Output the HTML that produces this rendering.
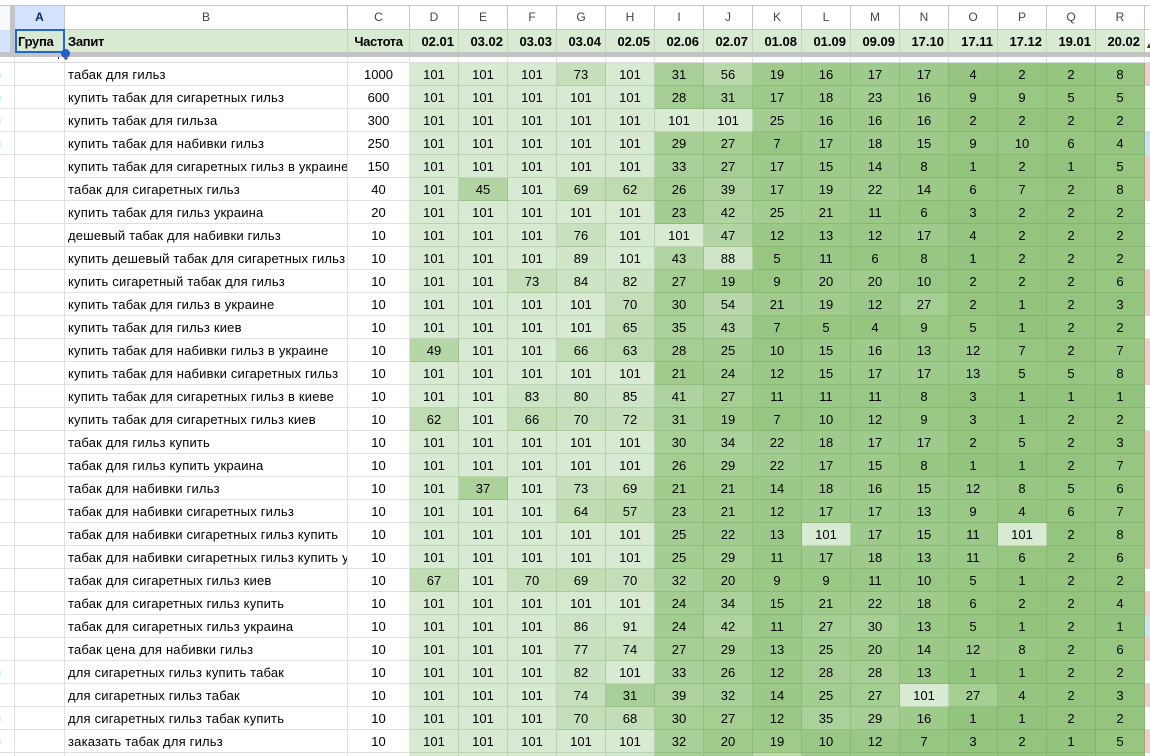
<!DOCTYPE html>
<html lang="uk"><head><meta charset="utf-8"><title>Таблиця</title>
<style>
html,body{margin:0;padding:0;width:1150px;height:756px;overflow:hidden;background:#fff}
body{position:relative;font:13px "Liberation Sans","Noto Sans CJK SC",sans-serif;color:#000}
div.a{position:absolute}
table{position:absolute;border-collapse:separate;border-spacing:0;table-layout:fixed;width:1150px;left:0}
td{box-sizing:border-box;padding:0;overflow:hidden;white-space:nowrap;text-align:center;border-right:1px solid #e0e0e0;border-bottom:1px solid #e0e0e0}
#g tr{height:23px}
#g td{height:23px;line-height:20px;padding-top:2px}
#g td:nth-child(3){text-align:left;padding-left:3px;letter-spacing:.19px}
#g td:nth-child(n+5):nth-child(-n+19){--v:101;background:rgb(calc(147 + .7*(var(--v) - 1)),calc(196 + .38*(var(--v) - 1)),calc(125 + .86*(var(--v) - 1)));border-color:rgba(70,120,50,.2)}
#g td:last-child{border-right:0}
#g td.p{background:#f4cccc;border-bottom-color:#f4cccc}
#g td.b{background:#cfe2f3;border-bottom-color:#cfe2f3}
#g tr.s{height:6px}
#g tr.s td{height:6px;line-height:0;padding:0;background:#fff!important;border-right:1px solid #e0e0e0!important;border-bottom:1px solid #dcdcdc!important;font-size:0}
#g tr.s td:last-child{border-right:0!important}
#h tr.l td{height:24px;border-right:1px solid #c7c7c7;border-bottom:1px solid #c7c7c7;font-size:12px;color:#444;line-height:23px}
#h tr.l td:last-child{border:0;border-bottom:1px solid #c7c7c7}
#h tr.l td.sel{background:#d3e3fd;color:#0b2a6b;font-weight:bold}
#h tr.t td{height:23px;background:#d9ead3;font-weight:bold;line-height:23px;border-right:1px solid #c3d8bb;border-bottom:0;color:#000;text-align:right;padding-right:4px}
#h tr.t td.lf{text-align:left;padding:0 0 0 3px;letter-spacing:-.3px}
#h tr.t td.ce{text-align:center;padding:0;letter-spacing:-.4px}
#h tr.t td.e{background:#fff;border:0}
.cy{background:#bdf3fb;width:1px;height:4px;left:0}
</style></head><body>
<table id="h" style="top:6px"><colgroup><col style="width:15px"><col style="width:50px"><col style="width:283px"><col style="width:62px"><col span="15" style="width:49px"><col style="width:5px"></colgroup>
<tr class="l"><td style="border:0;background:#f8f9fa"></td><td class="sel">A</td><td>B</td><td>C</td><td>D</td><td>E</td><td>F</td><td>G</td><td>H</td><td>I</td><td>J</td><td>K</td><td>L</td><td>M</td><td>N</td><td>O</td><td>P</td><td>Q</td><td>R</td><td></td></tr>
<tr class="t"><td class="e" style="background:#d3e3fd"></td><td class="lf">Група</td><td class="lf">Запит</td><td class="ce">Частота</td><td>02.01</td><td>03.02</td><td>03.03</td><td>03.04</td><td>02.05</td><td>02.06</td><td>02.07</td><td>01.08</td><td>01.09</td><td>09.09</td><td>17.10</td><td>17.11</td><td>17.12</td><td>19.01</td><td>20.02</td><td class="e"></td></tr>
</table>
<div class="a" style="left:0;top:5px;width:1150px;height:1px;background:#c7c7c7"></div>
<div class="a" style="left:10px;top:6px;width:5px;height:46px;background:#c4c4c4"></div>
<div class="a" style="left:0;top:52px;width:1150px;height:5px;background:#c4c4c4"></div>
<table id="g" style="top:57px"><colgroup><col style="width:15px"><col style="width:50px"><col style="width:283px"><col style="width:62px"><col span="15" style="width:49px"><col style="width:5px"></colgroup>
<tr class="s"><td></td><td></td><td></td><td></td><td></td><td></td><td></td><td></td><td></td><td></td><td></td><td></td><td></td><td></td><td></td><td></td><td></td><td></td><td></td><td></td></tr>
<tr><td></td><td></td><td>табак для гильз</td><td>1000</td><td>101</td><td>101</td><td>101</td><td style="--v:73">73</td><td>101</td><td style="--v:31">31</td><td style="--v:56">56</td><td style="--v:19">19</td><td style="--v:16">16</td><td style="--v:17">17</td><td style="--v:17">17</td><td style="--v:4">4</td><td style="--v:2">2</td><td style="--v:2">2</td><td style="--v:8">8</td><td class="p"></td></tr>
<tr><td></td><td></td><td>купить табак для сигаретных гильз</td><td>600</td><td>101</td><td>101</td><td>101</td><td>101</td><td>101</td><td style="--v:28">28</td><td style="--v:31">31</td><td style="--v:17">17</td><td style="--v:18">18</td><td style="--v:23">23</td><td style="--v:16">16</td><td style="--v:9">9</td><td style="--v:9">9</td><td style="--v:5">5</td><td style="--v:5">5</td><td></td></tr>
<tr><td></td><td></td><td>купить табак для гильза</td><td>300</td><td>101</td><td>101</td><td>101</td><td>101</td><td>101</td><td>101</td><td>101</td><td style="--v:25">25</td><td style="--v:16">16</td><td style="--v:16">16</td><td style="--v:16">16</td><td style="--v:2">2</td><td style="--v:2">2</td><td style="--v:2">2</td><td style="--v:2">2</td><td></td></tr>
<tr><td></td><td></td><td>купить табак для набивки гильз</td><td>250</td><td>101</td><td>101</td><td>101</td><td>101</td><td>101</td><td style="--v:29">29</td><td style="--v:27">27</td><td style="--v:7">7</td><td style="--v:17">17</td><td style="--v:18">18</td><td style="--v:15">15</td><td style="--v:9">9</td><td style="--v:10">10</td><td style="--v:6">6</td><td style="--v:4">4</td><td class="b"></td></tr>
<tr><td></td><td></td><td>купить табак для сигаретных гильз в украине</td><td>150</td><td>101</td><td>101</td><td>101</td><td>101</td><td>101</td><td style="--v:33">33</td><td style="--v:27">27</td><td style="--v:17">17</td><td style="--v:15">15</td><td style="--v:14">14</td><td style="--v:8">8</td><td style="--v:1">1</td><td style="--v:2">2</td><td style="--v:1">1</td><td style="--v:5">5</td><td class="p"></td></tr>
<tr><td></td><td></td><td>табак для сигаретных гильз</td><td>40</td><td>101</td><td style="--v:45">45</td><td>101</td><td style="--v:69">69</td><td style="--v:62">62</td><td style="--v:26">26</td><td style="--v:39">39</td><td style="--v:17">17</td><td style="--v:19">19</td><td style="--v:22">22</td><td style="--v:14">14</td><td style="--v:6">6</td><td style="--v:7">7</td><td style="--v:2">2</td><td style="--v:8">8</td><td class="p"></td></tr>
<tr><td></td><td></td><td>купить табак для гильз украина</td><td>20</td><td>101</td><td>101</td><td>101</td><td>101</td><td>101</td><td style="--v:23">23</td><td style="--v:42">42</td><td style="--v:25">25</td><td style="--v:21">21</td><td style="--v:11">11</td><td style="--v:6">6</td><td style="--v:3">3</td><td style="--v:2">2</td><td style="--v:2">2</td><td style="--v:2">2</td><td></td></tr>
<tr><td></td><td></td><td>дешевый табак для набивки гильз</td><td>10</td><td>101</td><td>101</td><td>101</td><td style="--v:76">76</td><td>101</td><td>101</td><td style="--v:47">47</td><td style="--v:12">12</td><td style="--v:13">13</td><td style="--v:12">12</td><td style="--v:17">17</td><td style="--v:4">4</td><td style="--v:2">2</td><td style="--v:2">2</td><td style="--v:2">2</td><td></td></tr>
<tr><td></td><td></td><td>купить дешевый табак для сигаретных гильз</td><td>10</td><td>101</td><td>101</td><td>101</td><td style="--v:89">89</td><td>101</td><td style="--v:43">43</td><td style="--v:88">88</td><td style="--v:5">5</td><td style="--v:11">11</td><td style="--v:6">6</td><td style="--v:8">8</td><td style="--v:1">1</td><td style="--v:2">2</td><td style="--v:2">2</td><td style="--v:2">2</td><td></td></tr>
<tr><td></td><td></td><td>купить сигаретный табак для гильз</td><td>10</td><td>101</td><td>101</td><td style="--v:73">73</td><td style="--v:84">84</td><td style="--v:82">82</td><td style="--v:27">27</td><td style="--v:19">19</td><td style="--v:9">9</td><td style="--v:20">20</td><td style="--v:20">20</td><td style="--v:10">10</td><td style="--v:2">2</td><td style="--v:2">2</td><td style="--v:2">2</td><td style="--v:6">6</td><td class="p"></td></tr>
<tr><td></td><td></td><td>купить табак для гильз в украине</td><td>10</td><td>101</td><td>101</td><td>101</td><td>101</td><td style="--v:70">70</td><td style="--v:30">30</td><td style="--v:54">54</td><td style="--v:21">21</td><td style="--v:19">19</td><td style="--v:12">12</td><td style="--v:27">27</td><td style="--v:2">2</td><td style="--v:1">1</td><td style="--v:2">2</td><td style="--v:3">3</td><td class="p"></td></tr>
<tr><td></td><td></td><td>купить табак для гильз киев</td><td>10</td><td>101</td><td>101</td><td>101</td><td>101</td><td style="--v:65">65</td><td style="--v:35">35</td><td style="--v:43">43</td><td style="--v:7">7</td><td style="--v:5">5</td><td style="--v:4">4</td><td style="--v:9">9</td><td style="--v:5">5</td><td style="--v:1">1</td><td style="--v:2">2</td><td style="--v:2">2</td><td></td></tr>
<tr><td></td><td></td><td>купить табак для набивки гильз в украине</td><td>10</td><td style="--v:49">49</td><td>101</td><td>101</td><td style="--v:66">66</td><td style="--v:63">63</td><td style="--v:28">28</td><td style="--v:25">25</td><td style="--v:10">10</td><td style="--v:15">15</td><td style="--v:16">16</td><td style="--v:13">13</td><td style="--v:12">12</td><td style="--v:7">7</td><td style="--v:2">2</td><td style="--v:7">7</td><td class="p"></td></tr>
<tr><td></td><td></td><td>купить табак для набивки сигаретных гильз</td><td>10</td><td>101</td><td>101</td><td>101</td><td>101</td><td>101</td><td style="--v:21">21</td><td style="--v:24">24</td><td style="--v:12">12</td><td style="--v:15">15</td><td style="--v:17">17</td><td style="--v:17">17</td><td style="--v:13">13</td><td style="--v:5">5</td><td style="--v:5">5</td><td style="--v:8">8</td><td class="p"></td></tr>
<tr><td></td><td></td><td>купить табак для сигаретных гильз в киеве</td><td>10</td><td>101</td><td>101</td><td style="--v:83">83</td><td style="--v:80">80</td><td style="--v:85">85</td><td style="--v:41">41</td><td style="--v:27">27</td><td style="--v:11">11</td><td style="--v:11">11</td><td style="--v:11">11</td><td style="--v:8">8</td><td style="--v:3">3</td><td style="--v:1">1</td><td style="--v:1">1</td><td style="--v:1">1</td><td></td></tr>
<tr><td></td><td></td><td>купить табак для сигаретных гильз киев</td><td>10</td><td style="--v:62">62</td><td>101</td><td style="--v:66">66</td><td style="--v:70">70</td><td style="--v:72">72</td><td style="--v:31">31</td><td style="--v:19">19</td><td style="--v:7">7</td><td style="--v:10">10</td><td style="--v:12">12</td><td style="--v:9">9</td><td style="--v:3">3</td><td style="--v:1">1</td><td style="--v:2">2</td><td style="--v:2">2</td><td></td></tr>
<tr><td></td><td></td><td>табак для гильз купить</td><td>10</td><td>101</td><td>101</td><td>101</td><td>101</td><td>101</td><td style="--v:30">30</td><td style="--v:34">34</td><td style="--v:22">22</td><td style="--v:18">18</td><td style="--v:17">17</td><td style="--v:17">17</td><td style="--v:2">2</td><td style="--v:5">5</td><td style="--v:2">2</td><td style="--v:3">3</td><td class="p"></td></tr>
<tr><td></td><td></td><td>табак для гильз купить украина</td><td>10</td><td>101</td><td>101</td><td>101</td><td>101</td><td>101</td><td style="--v:26">26</td><td style="--v:29">29</td><td style="--v:22">22</td><td style="--v:17">17</td><td style="--v:15">15</td><td style="--v:8">8</td><td style="--v:1">1</td><td style="--v:1">1</td><td style="--v:2">2</td><td style="--v:7">7</td><td class="p"></td></tr>
<tr><td></td><td></td><td>табак для набивки гильз</td><td>10</td><td>101</td><td style="--v:37">37</td><td>101</td><td style="--v:73">73</td><td style="--v:69">69</td><td style="--v:21">21</td><td style="--v:21">21</td><td style="--v:14">14</td><td style="--v:18">18</td><td style="--v:16">16</td><td style="--v:15">15</td><td style="--v:12">12</td><td style="--v:8">8</td><td style="--v:5">5</td><td style="--v:6">6</td><td class="p"></td></tr>
<tr><td></td><td></td><td>табак для набивки сигаретных гильз</td><td>10</td><td>101</td><td>101</td><td>101</td><td style="--v:64">64</td><td style="--v:57">57</td><td style="--v:23">23</td><td style="--v:21">21</td><td style="--v:12">12</td><td style="--v:17">17</td><td style="--v:17">17</td><td style="--v:13">13</td><td style="--v:9">9</td><td style="--v:4">4</td><td style="--v:6">6</td><td style="--v:7">7</td><td class="p"></td></tr>
<tr><td></td><td></td><td>табак для набивки сигаретных гильз купить</td><td>10</td><td>101</td><td>101</td><td>101</td><td>101</td><td>101</td><td style="--v:25">25</td><td style="--v:22">22</td><td style="--v:13">13</td><td>101</td><td style="--v:17">17</td><td style="--v:15">15</td><td style="--v:11">11</td><td>101</td><td style="--v:2">2</td><td style="--v:8">8</td><td class="p"></td></tr>
<tr><td></td><td></td><td>табак для набивки сигаретных гильз купить украина</td><td>10</td><td>101</td><td>101</td><td>101</td><td>101</td><td>101</td><td style="--v:25">25</td><td style="--v:29">29</td><td style="--v:11">11</td><td style="--v:17">17</td><td style="--v:18">18</td><td style="--v:13">13</td><td style="--v:11">11</td><td style="--v:6">6</td><td style="--v:2">2</td><td style="--v:6">6</td><td class="p"></td></tr>
<tr><td></td><td></td><td>табак для сигаретных гильз киев</td><td>10</td><td style="--v:67">67</td><td>101</td><td style="--v:70">70</td><td style="--v:69">69</td><td style="--v:70">70</td><td style="--v:32">32</td><td style="--v:20">20</td><td style="--v:9">9</td><td style="--v:9">9</td><td style="--v:11">11</td><td style="--v:10">10</td><td style="--v:5">5</td><td style="--v:1">1</td><td style="--v:2">2</td><td style="--v:2">2</td><td></td></tr>
<tr><td></td><td></td><td>табак для сигаретных гильз купить</td><td>10</td><td>101</td><td>101</td><td>101</td><td>101</td><td>101</td><td style="--v:24">24</td><td style="--v:34">34</td><td style="--v:15">15</td><td style="--v:21">21</td><td style="--v:22">22</td><td style="--v:18">18</td><td style="--v:6">6</td><td style="--v:2">2</td><td style="--v:2">2</td><td style="--v:4">4</td><td class="p"></td></tr>
<tr><td></td><td></td><td>табак для сигаретных гильз украина</td><td>10</td><td>101</td><td>101</td><td>101</td><td style="--v:86">86</td><td style="--v:91">91</td><td style="--v:24">24</td><td style="--v:42">42</td><td style="--v:11">11</td><td style="--v:27">27</td><td style="--v:30">30</td><td style="--v:13">13</td><td style="--v:5">5</td><td style="--v:1">1</td><td style="--v:2">2</td><td style="--v:1">1</td><td class="b"></td></tr>
<tr><td></td><td></td><td>табак цена для набивки гильз</td><td>10</td><td>101</td><td>101</td><td>101</td><td style="--v:77">77</td><td style="--v:74">74</td><td style="--v:27">27</td><td style="--v:29">29</td><td style="--v:13">13</td><td style="--v:25">25</td><td style="--v:20">20</td><td style="--v:14">14</td><td style="--v:12">12</td><td style="--v:8">8</td><td style="--v:2">2</td><td style="--v:6">6</td><td class="p"></td></tr>
<tr><td></td><td></td><td>для сигаретных гильз купить табак</td><td>10</td><td>101</td><td>101</td><td>101</td><td style="--v:82">82</td><td>101</td><td style="--v:33">33</td><td style="--v:26">26</td><td style="--v:12">12</td><td style="--v:28">28</td><td style="--v:28">28</td><td style="--v:13">13</td><td style="--v:1">1</td><td style="--v:1">1</td><td style="--v:2">2</td><td style="--v:2">2</td><td></td></tr>
<tr><td></td><td></td><td>для сигаретных гильз табак</td><td>10</td><td>101</td><td>101</td><td>101</td><td style="--v:74">74</td><td style="--v:31">31</td><td style="--v:39">39</td><td style="--v:32">32</td><td style="--v:14">14</td><td style="--v:25">25</td><td style="--v:27">27</td><td>101</td><td style="--v:27">27</td><td style="--v:4">4</td><td style="--v:2">2</td><td style="--v:3">3</td><td class="p"></td></tr>
<tr><td></td><td></td><td>для сигаретных гильз табак купить</td><td>10</td><td>101</td><td>101</td><td>101</td><td style="--v:70">70</td><td style="--v:68">68</td><td style="--v:30">30</td><td style="--v:27">27</td><td style="--v:12">12</td><td style="--v:35">35</td><td style="--v:29">29</td><td style="--v:16">16</td><td style="--v:1">1</td><td style="--v:1">1</td><td style="--v:2">2</td><td style="--v:2">2</td><td></td></tr>
<tr><td></td><td></td><td>заказать табак для гильз</td><td>10</td><td>101</td><td>101</td><td>101</td><td>101</td><td>101</td><td style="--v:32">32</td><td style="--v:20">20</td><td style="--v:19">19</td><td style="--v:10">10</td><td style="--v:12">12</td><td style="--v:7">7</td><td style="--v:3">3</td><td style="--v:2">2</td><td style="--v:1">1</td><td style="--v:5">5</td><td class="p"></td></tr>
<tr><td></td><td></td><td></td><td></td><td>101</td><td>101</td><td>101</td><td>101</td><td style="--v:90">90</td><td style="--v:30">30</td><td style="--v:25">25</td><td style="--v:60">60</td><td style="--v:15">15</td><td style="--v:15">15</td><td style="--v:10">10</td><td style="--v:5">5</td><td style="--v:2">2</td><td style="--v:2">2</td><td style="--v:2">2</td><td></td></tr>
</table>
<div class="a cy" style="top:73px"></div><div class="a cy" style="top:96px"></div><div class="a cy" style="top:119px"></div><div class="a cy" style="top:142px"></div><div class="a cy" style="top:671px"></div><div class="a cy" style="top:717px"></div><div class="a cy" style="top:740px"></div>
<div class="a" style="left:15px;top:29px;width:46px;height:20px;border:2px solid #1f66d6"></div>
<div class="a" style="left:61px;top:49px;width:9px;height:9px;border-radius:50%;background:#1a5fd0"></div>
<div class="a" style="left:58px;top:57px;width:1px;height:2px;background:#333"></div>
<div class="a" style="left:64px;top:58px;width:0;height:0;border-left:2px solid transparent;border-right:2px solid transparent;border-top:2px solid #333"></div>
<div class="a" style="left:1147px;top:43px;width:0;height:0;border-left:2px solid transparent;border-bottom:5px solid #4a3a1c;border-right:2px solid transparent"></div>
</body></html>
